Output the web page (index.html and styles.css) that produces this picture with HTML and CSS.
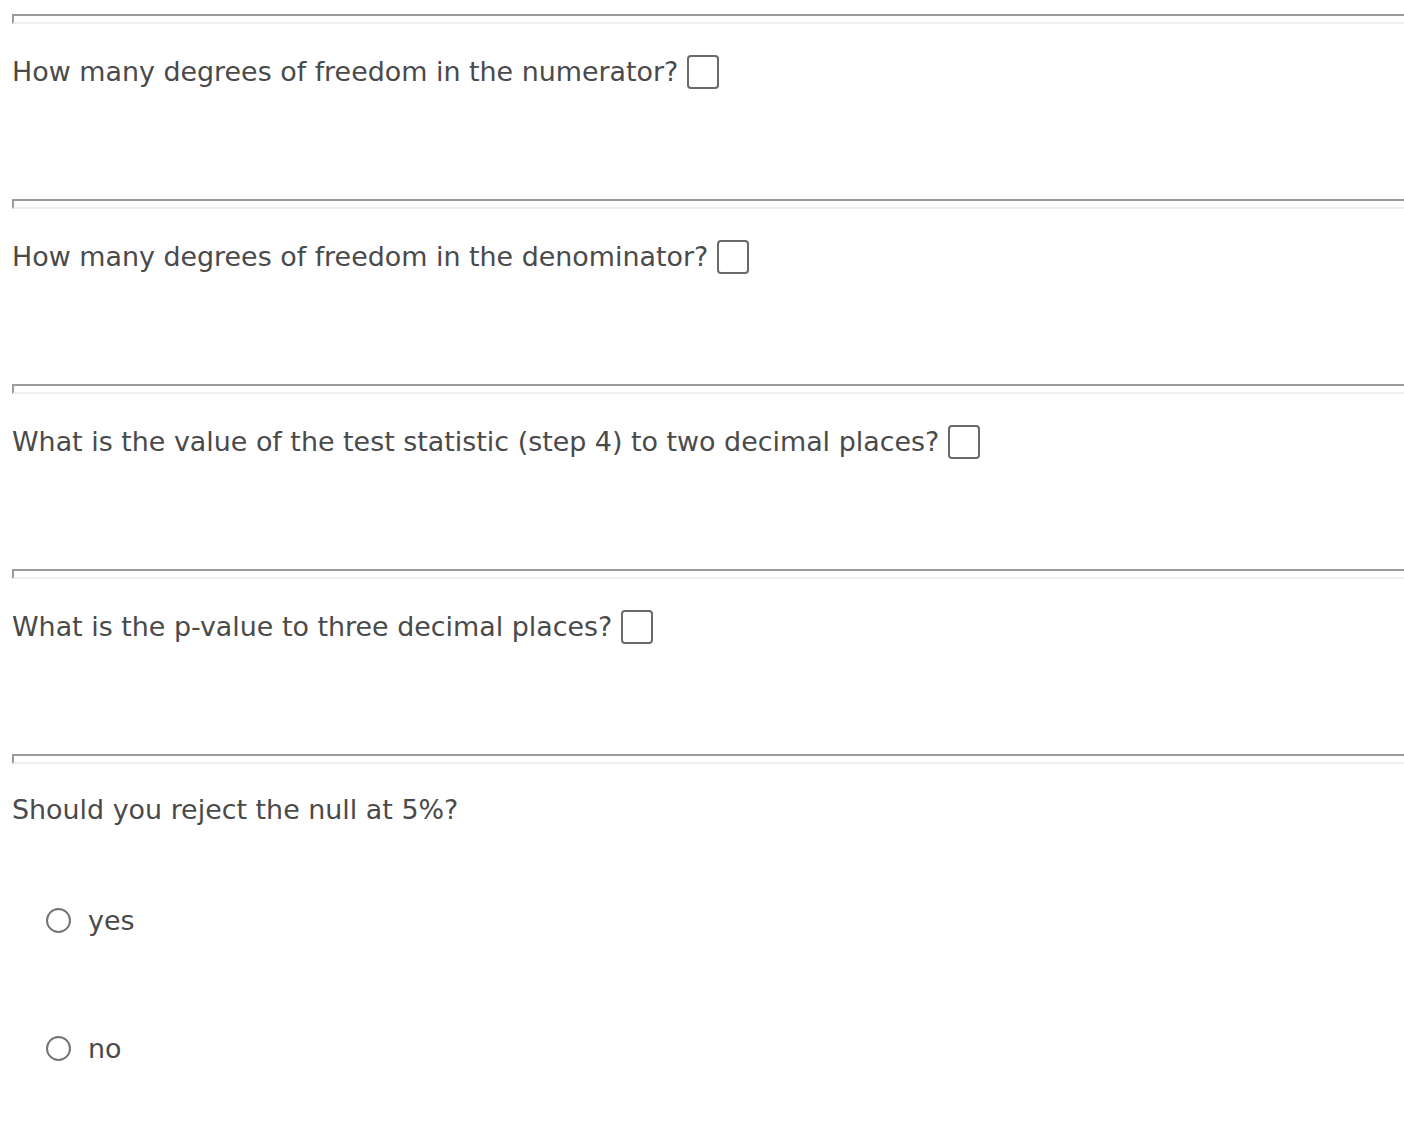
FILE: index.html
```html
<!DOCTYPE html>
<html>
<head>
<meta charset="utf-8">
<link rel="stylesheet" href="styles.css">
</head>
<body>
<div class="page">
  <div class="block">
    <div class="rule"></div>
    <p class="q">How many degrees of freedom in the numerator? <span class="box"></span></p>
  </div>
  <div class="block">
    <div class="rule"></div>
    <p class="q">How many degrees of freedom in the denominator? <span class="box"></span></p>
  </div>
  <div class="block">
    <div class="rule"></div>
    <p class="q">What is the value of the test statistic (step 4) to two decimal places? <span class="box"></span></p>
  </div>
  <div class="block">
    <div class="rule"></div>
    <p class="q">What is the p-value to three decimal places? <span class="box"></span></p>
  </div>
  <div class="block last">
    <div class="rule"></div>
    <p class="q last-q">Should you reject the null at 5%?</p>
    <div class="options">
      <div class="opt"><span class="radio"></span><span class="lbl">yes</span></div>
      <div class="opt"><span class="radio"></span><span class="lbl">no</span></div>
    </div>
  </div>
</div>
</body>
</html>
```

FILE: styles.css
```css
html, body {
  margin: 0;
  padding: 0;
  background: #fff;
  overflow: hidden;
}
.page {
  padding: 14px 0 0 12px;
  font-family: "DejaVu Sans", Verdana, sans-serif;
  color: #4a4a4a;
}
.block {
  height: 185px;
}
.block.last {
  height: auto;
}
.rule {
  height: 6px;
  margin-right: -20px;
  border-top: 2px solid #9a9a9a;
  border-left: 2px solid #9a9a9a;
  border-bottom: 2px solid #eeeeee;
}
.q {
  margin: 30px 0 0 0;
  font-size: 26.9px;
  line-height: 36px;
  display: flex;
  align-items: center;
  white-space: nowrap;
}
.q.last-q {
  margin-top: 28px;
}
.box {
  display: inline-block;
  width: 28px;
  height: 30px;
  border: 2px solid #6a6a6a;
  border-radius: 4px;
  margin-left: 9px;
}
.options {
  display: flex;
  flex-direction: column;
  gap: 92px;
  margin-top: 74px;
  padding-left: 34px;
}
.opt {
  display: flex;
  align-items: center;
  height: 36px;
  font-size: 26.9px;
}
.radio {
  width: 21px;
  height: 21px;
  border: 2px solid #737373;
  border-radius: 50%;
  margin-right: 17px;
  flex: none;
}
.lbl {
  color: #4a4a4a;
}
```
